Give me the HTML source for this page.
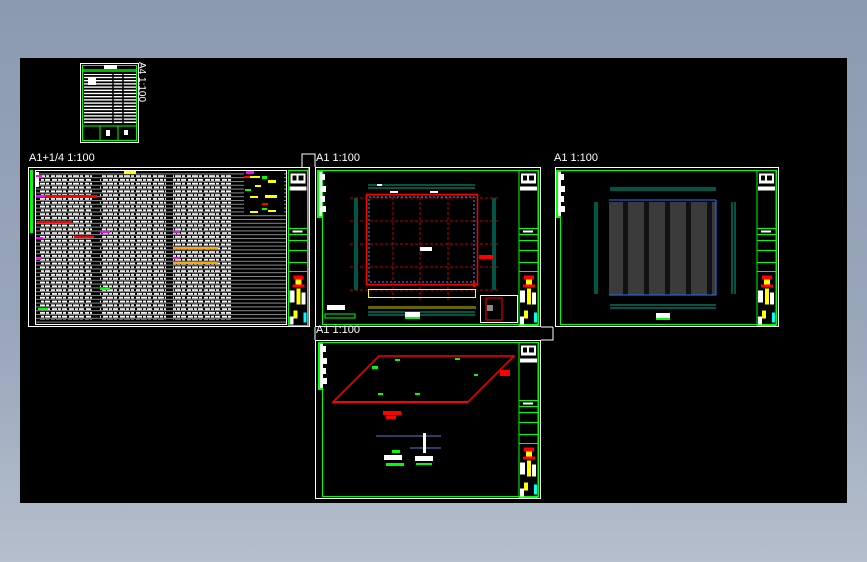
<!DOCTYPE html>
<html><head><meta charset="utf-8"><style>
html,body{margin:0;padding:0;width:867px;height:562px;overflow:hidden;background:linear-gradient(#8c9ab0,#9aa7bb 60%,#b5bfcd);}
svg{display:block}
text{font-family:"Liberation Sans",sans-serif;fill:#fff}
</style></head><body>
<svg width="867" height="562" viewBox="0 0 867 562">
<defs>
<pattern id="lines" width="10" height="3.8" patternUnits="userSpaceOnUse">
<rect width="10" height="1" y="2.4" fill="#8a8a8a"/>
</pattern>
<pattern id="txt" width="17" height="7.6" patternUnits="userSpaceOnUse">
<rect x="0" y="0.4" width="4" height="1.8" fill="#fff"/><rect x="5" y="0.4" width="6" height="1.8" fill="#fff"/><rect x="12" y="0.4" width="3" height="1.8" fill="#fff"/>
<rect x="1" y="4.2" width="5" height="1.8" fill="#fff"/><rect x="7" y="4.2" width="3" height="1.8" fill="#fff"/><rect x="11" y="4.2" width="5" height="1.8" fill="#fff"/>
</pattern>
<pattern id="a4rows" width="10" height="3.2" patternUnits="userSpaceOnUse">
<rect width="10" height="1.4" fill="#fff"/>
</pattern>
<g id="tb">
<rect x="0" y="0" width="19" height="155" fill="none" stroke="#0f0" stroke-width="1"/>
<rect x="2" y="3" width="15" height="10" fill="#fff"/>
<rect x="4" y="5" width="4" height="5" fill="#000"/><rect x="10" y="5" width="5" height="5" fill="#000"/>
<rect x="1" y="16" width="17" height="4" fill="#fff"/>
<line x1="0" y1="58" x2="19" y2="58" stroke="#0f0"/>
<line x1="0" y1="64" x2="19" y2="64" stroke="#0f0"/>
<line x1="0" y1="70" x2="19" y2="70" stroke="#0f0"/>
<line x1="0" y1="80" x2="19" y2="80" stroke="#0f0"/>
<line x1="0" y1="92" x2="19" y2="92" stroke="#0f0"/>
<line x1="0" y1="101" x2="19" y2="101" stroke="#0f0"/>
<rect x="4" y="60" width="10" height="2" fill="#fff"/>
<rect x="5" y="105" width="10" height="4" fill="#f00"/>
<rect x="7" y="109" width="6" height="5" fill="#ff0"/>
<rect x="4" y="114" width="12" height="3" fill="#f00"/>
<rect x="8" y="118" width="4" height="16" fill="#ff0"/>
<rect x="1" y="120" width="5" height="12" fill="#fff"/>
<rect x="13" y="122" width="4" height="12" fill="#fff"/>
<rect x="5" y="140" width="4" height="8" fill="#ff0"/>
<rect x="15" y="142" width="3" height="10" fill="#0ff"/>
<rect x="1" y="146" width="4" height="8" fill="#fff"/>
</g>
<g id="lstrip">
<rect x="0" y="0" width="5" height="48" fill="#0f0"/>
<rect x="2" y="2" width="3" height="44" fill="#fff"/>
<rect x="4" y="4" width="4" height="6" fill="#fff"/>
<rect x="4" y="16" width="5" height="6" fill="#fff"/>
<rect x="4" y="26" width="4" height="6" fill="#fff"/>
<rect x="4" y="36" width="5" height="6" fill="#fff"/>
</g>
</defs>
<rect x="20" y="58" width="827" height="445" fill="#000"/>

<text x="29" y="161" font-size="11">A1+1/4 1:100</text>
<text x="316" y="161" font-size="11">A1 1:100</text>
<text x="554" y="161" font-size="11">A1 1:100</text>
<text x="316" y="333" font-size="11">A1 1:100</text>
<text x="0" y="0" font-size="10" transform="translate(139,62) rotate(90)">A4 1:100</text>

<path d="M302 167 V154 H315 V167" fill="none" stroke="#fff" stroke-width="1"/>
<path d="M309 167 V327 M315 327 V340 M541 327 H553 M541 340 H553 V327" fill="none" stroke="#fff"/>

<rect x="80.5" y="63.5" width="58" height="79" fill="none" stroke="#fff"/>
<rect x="82.5" y="65.5" width="54" height="75" fill="none" stroke="#0f0"/>
<rect x="83" y="69" width="53" height="3" fill="#0f0" opacity=".7"/>
<rect x="104" y="65" width="13" height="4" fill="#fff"/>
<rect x="84" y="74" width="52" height="50" fill="url(#a4rows)"/>
<rect x="88" y="77" width="8" height="8" fill="#fff"/>
<line x1="113" y1="74" x2="113" y2="126" stroke="#000" stroke-width="1.5"/>
<line x1="123" y1="74" x2="123" y2="126" stroke="#000" stroke-width="1.5"/>
<line x1="83" y1="126" x2="136" y2="126" stroke="#0f0"/>
<line x1="100" y1="126" x2="100" y2="140" stroke="#0f0"/>
<line x1="118" y1="126" x2="118" y2="140" stroke="#0f0"/>
<rect x="106" y="130" width="4" height="6" fill="#fff"/><rect x="124" y="130" width="4" height="5" fill="#fff"/>

<rect x="28.5" y="167.5" width="281" height="159" fill="none" stroke="#fff"/>
<rect x="35.5" y="170.5" width="251" height="154" fill="none" stroke="#fff"/>
<rect x="36" y="172" width="250" height="152" fill="url(#lines)"/>
<rect x="40" y="174" width="52" height="146" fill="url(#txt)"/>
<rect x="100" y="174" width="66" height="146" fill="url(#txt)"/>
<rect x="173" y="174" width="58" height="146" fill="url(#txt)"/>
<rect x="30" y="170" width="3" height="63" fill="#0f0"/>
<rect x="35" y="172" width="4" height="15" fill="#fff"/>
<rect x="37" y="195" width="60" height="3" fill="#f00"/>
<rect x="37" y="221" width="35" height="2" fill="#f00"/>
<rect x="74" y="236" width="20" height="2" fill="#f00"/>
<rect x="36" y="175" width="6" height="2" fill="#f0f"/><rect x="36" y="195" width="10" height="2" fill="#f0f"/>
<rect x="36" y="237" width="7" height="2" fill="#f0f"/><rect x="36" y="258" width="5" height="2" fill="#f0f"/>
<rect x="100" y="231" width="10" height="2" fill="#f0f"/><rect x="173" y="231" width="7" height="2" fill="#f0f"/>
<rect x="173" y="257" width="7" height="2" fill="#f0f"/><rect x="100" y="287" width="5" height="2" fill="#f0f"/>
<rect x="100" y="288" width="10" height="2" fill="#0f0"/><rect x="38" y="308" width="10" height="2" fill="#0f0"/>
<rect x="124" y="171" width="12" height="3" fill="#ff0"/>
<rect x="173" y="247" width="45" height="2" fill="#fa0"/><rect x="173" y="262" width="45" height="2" fill="#fa0"/>
<rect x="244" y="173" width="40" height="40" fill="#000"/>
<g fill="#ff0"><rect x="246" y="176" width="14" height="2"/><rect x="255" y="185" width="6" height="2"/><rect x="250" y="196" width="8" height="2"/><rect x="250" y="211" width="8" height="2"/><rect x="268" y="180" width="8" height="3"/><rect x="265" y="195" width="12" height="3"/><rect x="268" y="210" width="8" height="2"/></g>
<g fill="#0f0"><rect x="245" y="189" width="6" height="2"/><rect x="262" y="176" width="5" height="3"/><rect x="262" y="208" width="5" height="2"/></g>
<rect x="244" y="176" width="6" height="2" fill="#f00"/><rect x="262" y="203" width="6" height="2" fill="#f00"/>
<rect x="246" y="171" width="8" height="3" fill="#f0f"/>
<use href="#tb" x="288.5" y="170.5"/>
<line x1="309.5" y1="167" x2="309.5" y2="327" stroke="#fff"/>

<rect x="315.5" y="167.5" width="225" height="159" fill="none" stroke="#fff"/>
<rect x="322.5" y="170.5" width="216" height="154" fill="none" stroke="#0f0"/>
<use href="#lstrip" x="317" y="170"/>
<use href="#tb" x="519" y="170.5"/>
<g stroke="#0a8" stroke-width="1" fill="none">
<line x1="368" y1="185" x2="475" y2="185"/><line x1="368" y1="188" x2="475" y2="188"/>
<line x1="368" y1="312" x2="475" y2="312"/><line x1="368" y1="315" x2="475" y2="315"/>
<line x1="355" y1="198" x2="355" y2="290"/><line x1="357" y1="198" x2="357" y2="290"/>
<line x1="493" y1="198" x2="493" y2="290"/><line x1="495" y1="198" x2="495" y2="290"/>
</g>
<rect x="366.5" y="194.5" width="111" height="90" fill="none" stroke="#f00" stroke-width="1.5"/>
<rect x="369" y="197" width="105" height="85" fill="none" stroke="#39f" stroke-width="1" stroke-dasharray="2 2"/>
<g stroke="#b00" stroke-width="1" stroke-dasharray="3 2">
<line x1="393" y1="197" x2="393" y2="300"/><line x1="420" y1="197" x2="420" y2="300"/><line x1="448" y1="197" x2="448" y2="300"/>
<line x1="350" y1="221" x2="500" y2="221"/><line x1="350" y1="244" x2="500" y2="244"/><line x1="350" y1="267" x2="500" y2="267"/>
<line x1="350" y1="198" x2="500" y2="198"/><line x1="350" y1="290" x2="500" y2="290"/>
</g>
<rect x="368.5" y="289.5" width="107" height="8" fill="none" stroke="#ff0"/>
<rect x="368" y="306" width="108" height="3" fill="#660"/>
<rect x="473" y="282" width="2" height="5" fill="#f00"/>
<rect x="479" y="255" width="14" height="4" fill="#f00"/>
<rect x="420" y="247" width="12" height="4" fill="#fff"/>
<rect x="405" y="312" width="15" height="5" fill="#fff"/><rect x="405" y="317" width="15" height="2" fill="#0f0"/>
<rect x="327" y="305" width="18" height="5" fill="#fff"/>
<rect x="325" y="314" width="30" height="4" fill="none" stroke="#0f0"/>
<rect x="480.5" y="295.5" width="37" height="27" fill="none" stroke="#fff"/>
<rect x="486" y="298" width="16" height="22" fill="none" stroke="#f00"/>
<rect x="487" y="305" width="6" height="6" fill="#888"/>
<g fill="#fff"><rect x="377" y="184" width="5" height="2"/><rect x="390" y="191" width="8" height="2"/><rect x="430" y="191" width="8" height="2"/></g>

<rect x="555.5" y="167.5" width="223" height="159" fill="none" stroke="#fff"/>
<rect x="560.5" y="170.5" width="216" height="154" fill="none" stroke="#0f0"/>
<use href="#lstrip" x="556" y="170"/>
<use href="#tb" x="757" y="170.5"/>
<g stroke="#0a8" stroke-width="1" fill="none">
<line x1="610" y1="188" x2="716" y2="188"/><line x1="610" y1="190" x2="716" y2="190"/>
<line x1="610" y1="305" x2="716" y2="305"/><line x1="610" y1="308" x2="716" y2="308"/>
<line x1="595" y1="202" x2="595" y2="294"/><line x1="597" y1="202" x2="597" y2="294"/>
<line x1="732" y1="202" x2="732" y2="294"/><line x1="735" y1="202" x2="735" y2="294"/>
</g>
<rect x="609" y="202" width="107" height="93" fill="#3b3b3b"/>
<g fill="#111"><rect x="623" y="202" width="5" height="93"/><rect x="644" y="202" width="5" height="93"/><rect x="665" y="202" width="5" height="93"/><rect x="686" y="202" width="5" height="93"/><rect x="707" y="202" width="5" height="93"/></g>
<line x1="609" y1="200" x2="716" y2="200" stroke="#27f"/><line x1="609" y1="295" x2="716" y2="295" stroke="#27f"/>
<line x1="716" y1="200" x2="716" y2="295" stroke="#27f"/>
<rect x="656" y="313" width="14" height="5" fill="#fff"/><rect x="656" y="318" width="14" height="2" fill="#0f0"/>

<rect x="315.5" y="340.5" width="225" height="158" fill="none" stroke="#fff"/>
<rect x="322.5" y="342.5" width="216" height="154" fill="none" stroke="#0f0"/>
<use href="#lstrip" x="318" y="342"/>
<use href="#tb" x="519" y="342.5"/>
<polygon points="333,402 379,356 514,356 468,402" fill="none" stroke="#f00" stroke-width="1.5"/>
<rect x="333" y="401" width="135" height="2" fill="#f00"/>
<rect x="500" y="370" width="10" height="6" fill="#f00"/>
<rect x="383" y="411" width="18" height="4" fill="#f00"/><rect x="386" y="416" width="10" height="3" fill="#f00"/>
<line x1="376" y1="436" x2="441" y2="436" stroke="#67c"/><line x1="410" y1="448" x2="441" y2="448" stroke="#67c"/>
<rect x="384" y="455" width="18" height="5" fill="#fff"/><rect x="386" y="463" width="18" height="3" fill="#0f0"/>
<rect x="415" y="456" width="18" height="5" fill="#fff"/><rect x="416" y="463" width="16" height="2" fill="#0f0"/>
<rect x="423" y="433" width="3" height="20" fill="#fff"/>
<g fill="#0f0"><rect x="372" y="366" width="6" height="3"/><rect x="395" y="359" width="5" height="2"/><rect x="455" y="358" width="5" height="2"/><rect x="378" y="393" width="5" height="2"/><rect x="415" y="393" width="5" height="2"/><rect x="474" y="374" width="4" height="2"/><rect x="392" y="450" width="8" height="3"/></g>
</svg>
</body></html>
